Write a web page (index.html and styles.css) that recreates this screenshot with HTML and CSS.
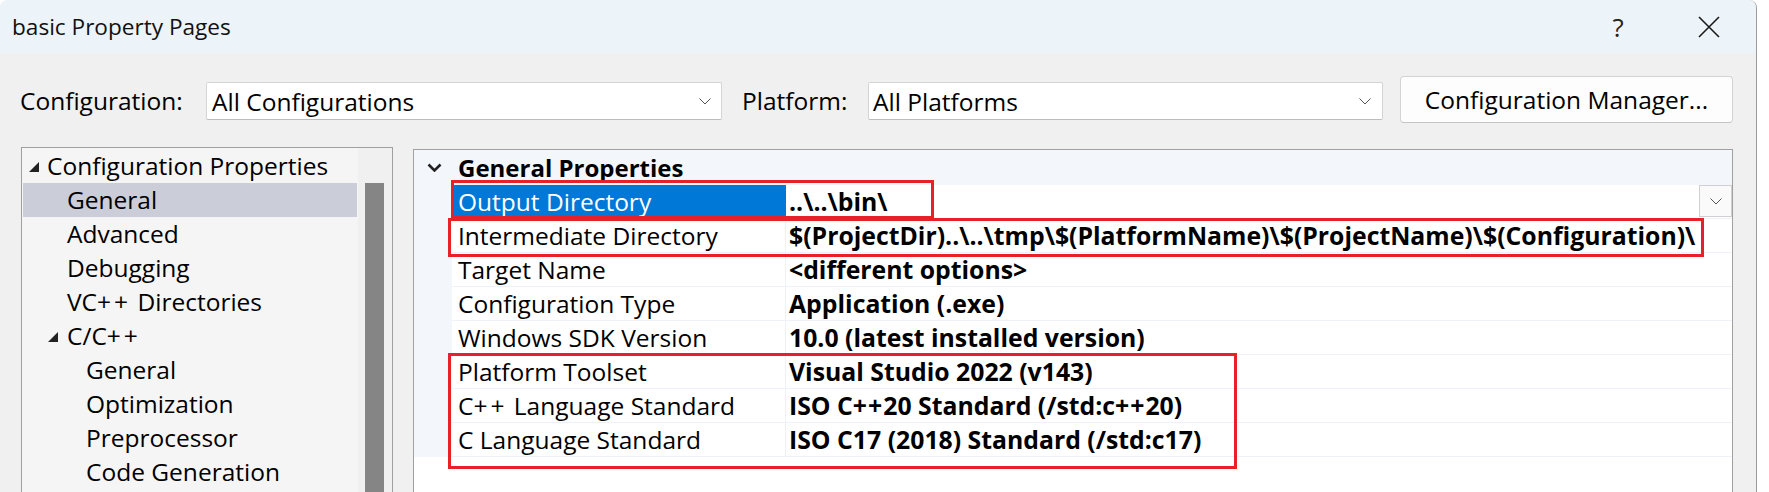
FILE: index.html
```html
<!DOCTYPE html>
<html>
<head>
<meta charset="utf-8">
<link rel="stylesheet" href="styles.css">
</head>
<body>
<div class="window">
  <div class="titlebar">
    <span class="title">basic Property Pages</span>
    <span class="help">?</span>
    <span class="close"><svg width="22" height="22" viewBox="0 0 22 22"><path d="M1 1 L21 21 M21 1 L1 21" stroke="#1a1a1a" stroke-width="1.6" fill="none"/></svg></span>
  </div>
  <div class="toolbar">
    <span class="lbl lbl-config">Configuration:</span>
    <div class="combo combo-config"><span class="combo-text">All Configurations</span><svg class="chev" width="12" height="7" viewBox="0 0 12 7"><path d="M0.5 0.5 L6 6 L11.5 0.5" stroke="#555" stroke-width="1" fill="none"/></svg></div>
    <span class="lbl lbl-platform">Platform:</span>
    <div class="combo combo-platform"><span class="combo-text">All Platforms</span><svg class="chev" width="12" height="7" viewBox="0 0 12 7"><path d="M0.5 0.5 L6 6 L11.5 0.5" stroke="#555" stroke-width="1" fill="none"/></svg></div>
    <button class="btn">Configuration Manager...</button>
  </div>
  <div class="main">
    <div class="tree">
      <ul class="tree-list">
        <li class="node l0"><svg class="tri" width="10" height="10" viewBox="0 0 10 10"><polygon points="10,0 10,10 0,10" fill="#222"/></svg><span>Configuration Properties</span></li>
        <li class="node l1 selected"><span>General</span></li>
        <li class="node l1"><span>Advanced</span></li>
        <li class="node l1"><span>Debugging</span></li>
        <li class="node l1"><span>VC<span class="pp">++</span> Directories</span></li>
        <li class="node l1 parent"><svg class="tri" width="10" height="10" viewBox="0 0 10 10"><polygon points="10,0 10,10 0,10" fill="#222"/></svg><span>C/C<span class="pp">++</span></span></li>
        <li class="node l2"><span>General</span></li>
        <li class="node l2"><span>Optimization</span></li>
        <li class="node l2"><span>Preprocessor</span></li>
        <li class="node l2"><span>Code Generation</span></li>
      </ul>
      <div class="scrollbar"><div class="thumb"></div></div>
    </div>
    <div class="props">
      <div class="grid-header">
        <svg class="hdr-chev" width="15" height="9" viewBox="0 0 15 9"><path d="M1.5 1.5 L7.5 7.5 L13.5 1.5" stroke="#222" stroke-width="2.6" fill="none"/></svg>
        <span class="hdr-text">General Properties</span>
      </div>
      <div class="rows">
        <div class="row selected"><div class="name">Output Directory</div><div class="value"><span>..\..\bin\</span><span class="dd"><svg width="12" height="7" viewBox="0 0 12 7"><path d="M0.5 0.5 L6 6 L11.5 0.5" stroke="#555" stroke-width="1" fill="none"/></svg></span></div></div>
        <div class="row"><div class="name">Intermediate Directory</div><div class="value"><span>$(ProjectDir)..\..\tmp\$(PlatformName)\$(ProjectName)\$(Configuration)\</span></div></div>
        <div class="row"><div class="name">Target Name</div><div class="value"><span>&lt;different options&gt;</span></div></div>
        <div class="row"><div class="name">Configuration Type</div><div class="value"><span>Application (.exe)</span></div></div>
        <div class="row"><div class="name">Windows SDK Version</div><div class="value"><span>10.0 (latest installed version)</span></div></div>
        <div class="row"><div class="name">Platform Toolset</div><div class="value"><span>Visual Studio 2022 (v143)</span></div></div>
        <div class="row"><div class="name">C<span class="pp">++</span> Language Standard</div><div class="value"><span>ISO C<span class="pb">++</span>20 Standard (/std:c<span class="pb">++</span>20)</span></div></div>
        <div class="row"><div class="name">C Language Standard</div><div class="value"><span>ISO C17 (2018) Standard (/std:c17)</span></div></div>
      </div>
      <div class="mark mark-1"></div>
      <div class="mark mark-2"></div>
      <div class="mark mark-3"></div>
    </div>
  </div>
</div>
</body>
</html>
```
FILE: styles.css
```css
* { box-sizing: border-box; }
html, body { margin: 0; padding: 0; }
body {
  background: #ffffff;
  font-family: "Open Sans", "Noto Sans", sans-serif;
  font-size: 24.5px;
  color: #000;
  overflow: hidden;
  width: 1769px;
  height: 492px;
}
.window {
  width: 1757px;
  height: 492px;
  background: #f0f0f0;
  border-right: 1px solid #9a9a9a;
  border-top-left-radius: 8px;
  border-top-right-radius: 8px;
  overflow: hidden;
  display: flex;
  flex-direction: column;
}
.titlebar {
  flex: none;
  height: 53px;
  background: #edf4f9;
  display: flex;
  align-items: center;
  padding-left: 12px;
}
.title { flex: 1; font-size: 22.6px; color: #111; white-space: nowrap; }
.help {
  width: 40px;
  text-align: center;
  font-size: 26px;
  color: #222;
}
.close {
  width: 40px;
  margin-left: 51px;
  margin-right: 27px;
  display: flex;
  justify-content: center;
  align-items: center;
}
.toolbar {
  flex: none;
  height: 94px;
  display: flex;
  align-items: flex-start;
  padding: 23px 0 0 20px;
}
.lbl {
  margin-top: 6px;
  height: 38px;
  line-height: 37px;
  white-space: nowrap;
}
.lbl-config { width: 186px; }
.lbl-platform { width: 126px; margin-left: 20px; }
.combo {
  margin-top: 6px;
  height: 38px;
  background: #fff;
  border: 1px solid #d4d4d4;
  border-bottom-color: #bcbcbc;
  border-radius: 2px;
  display: flex;
  align-items: center;
  justify-content: space-between;
  padding: 0 10px 0 5px;
  white-space: nowrap;
}
.combo-config { width: 516px; }
.combo-platform { width: 515px; padding-left: 4px; padding-right: 11px; }
.btn {
  margin-left: 17px;
  width: 333px;
  height: 47px;
  background: #fdfdfd;
  border: 1px solid #d3d3d3;
  border-bottom-color: #c4c4c4;
  border-radius: 4px;
  font: inherit;
  color: #000;
  padding: 0;
  white-space: nowrap;
}
.main {
  flex: 1;
  min-height: 0;
  display: flex;
  align-items: stretch;
  padding-left: 21px;
}
.tree {
  width: 372px;
  border: 1px solid #a0a0a0;
  border-bottom: none;
  background: #f5f5f5;
  display: flex;
}
.tree-list {
  list-style: none;
  margin: 0;
  padding: 1px 1px 0 1px;
  flex: 1;
  min-width: 0;
}
.node {
  height: 34px;
  line-height: 34px;
  display: flex;
  align-items: center;
  white-space: nowrap;
}
.pp { letter-spacing: 3px; }
.pb { letter-spacing: 1px; }
.node.l0 { padding-left: 6px; }
.node.l0 .tri { margin-right: 8px; margin-top: 1px; }
.node.l1 { padding-left: 44px; }
.node.l1.parent { padding-left: 25px; }
.node.l1.parent .tri { margin-right: 9px; margin-top: 1px; }
.node.l2 { padding-left: 63px; }
.node.selected { background: #cbcdd9; }
.scrollbar {
  width: 34px;
  flex: none;
  background: #f0f0f0;
  padding: 35px 0 0 7px;
}
.thumb {
  width: 19px;
  height: 100%;
  background: #858585;
}
.props {
  position: relative;
  margin-left: 20px;
  margin-top: 2px;
  width: 1320px;
  border: 1px solid #a0a0a0;
  border-bottom: none;
  background: #fff;
}
.grid-header {
  height: 35px;
  background: #f3f6fb;
  display: flex;
  align-items: center;
  padding-left: 13px;
}
.hdr-text {
  margin-left: 16px;
  font-weight: bold;
  font-size: 24px;
  line-height: 35px;
}
.rows {
  background: #f3f6fb;
  padding-left: 38px;
}
.row {
  height: 34px;
  display: flex;
  background: #fff;
  border-bottom: 1px solid #eef1f8;
}
.name {
  width: 334px;
  padding-left: 6px;
  line-height: 33px;
  border-right: 1px solid #eef1f8;
  white-space: nowrap;
}
.row.selected .name { background: #0078d7; color: #fff; border-right-color: #0078d7; }
.value {
  flex: 1;
  display: flex;
  align-items: flex-start;
  padding-left: 3px;
  font-weight: bold;
  font-size: 24.8px;
  line-height: 33px;
  white-space: nowrap;
}
.dd {
  margin-left: auto;
  width: 33px;
  height: 32px;
  background: #fafafa;
  border: 1px solid #d0d0d0;
  display: flex;
  align-items: center;
  justify-content: center;
}
.mark {
  position: absolute;
  border: 3px solid #e8202a;
}
.mark-1 { left: 37px; top: 30px; width: 483px; height: 39px; }
.mark-2 { left: 34px; top: 68px; width: 1256px; height: 39px; }
.mark-3 { left: 34px; top: 203px; width: 789px; height: 116px; }
```
